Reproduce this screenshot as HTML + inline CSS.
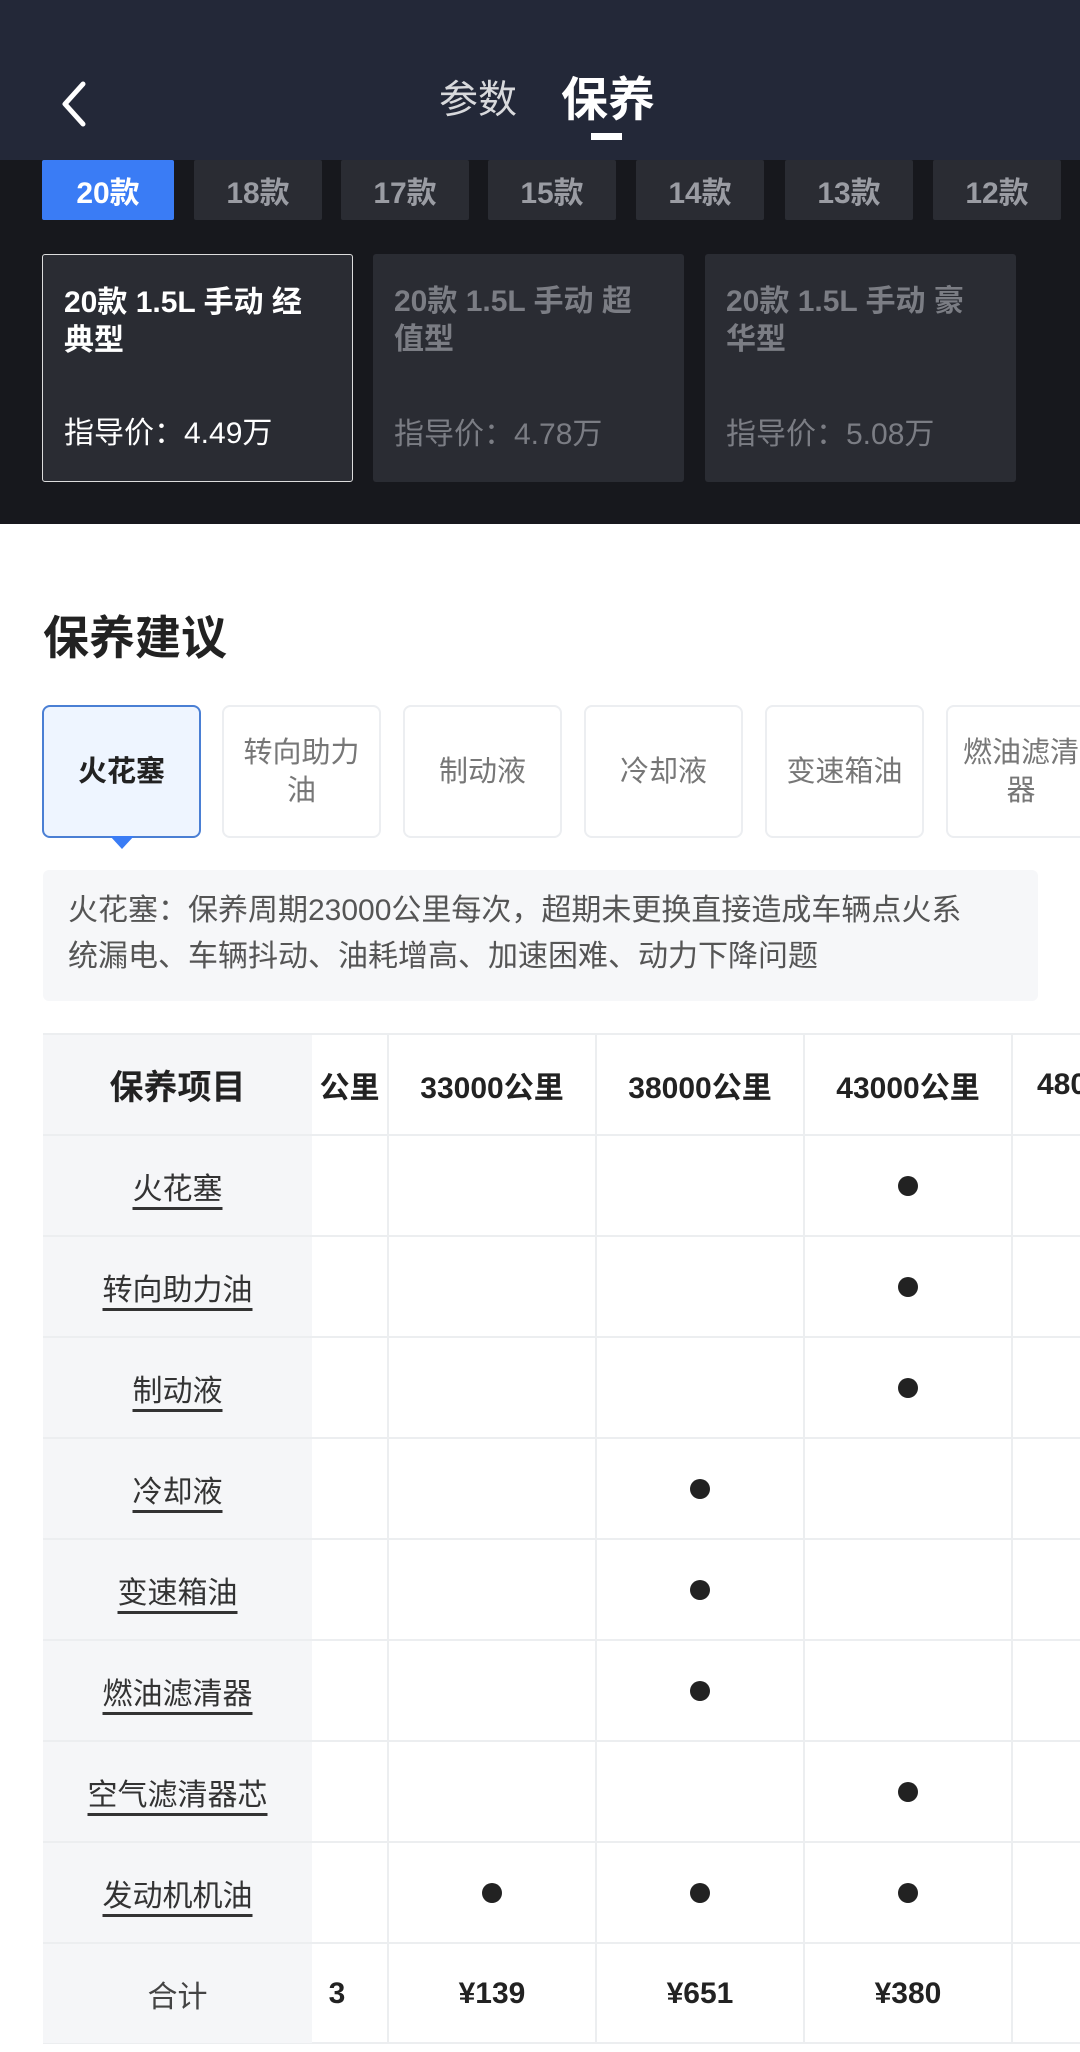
<!DOCTYPE html>
<html><head><meta charset="utf-8"><style>
*{margin:0;padding:0;box-sizing:border-box}
body{width:1080px;height:2052px;background:#fff;font-family:"Liberation Sans","Noto Sans CJK SC",sans-serif;position:relative;overflow:hidden}
.a{position:absolute}
.dark{left:0;top:0;width:1080px;height:524px;background:#17181d}
.hdr{left:0;top:0;width:1080px;height:160px;background:#232838}
.chip{top:160px;height:60px;width:128px;background:#2a2c33;color:#9a9ca3;font-size:30px;font-weight:bold;display:flex;align-items:center;justify-content:center;border-radius:2px}
.card{top:254px;width:311px;height:228px;background:#2a2c33;border-radius:3px;padding:29px 21px;color:#7b7d84;font-size:30px;font-weight:bold;line-height:38px;white-space:nowrap}
.card .p{position:absolute;left:21px;bottom:28px;font-weight:normal;font-size:30px}
.tab{top:705px;width:159px;height:133px;border:2px solid #eceef1;border-radius:8px;display:flex;align-items:center;justify-content:center;text-align:center;font-size:29px;color:#777;line-height:38px;background:#fff}
.row{left:43px;width:1037px;height:101px;border-top:2px solid #eceef0}
.cell{position:absolute;top:0;height:100%;display:flex;align-items:center;justify-content:center;font-size:30px;color:#222}
.dot{width:20px;height:20px;border-radius:50%;background:#222}
.vl{top:1033px;width:2px;height:1010px;background:#eceef0}
.name{left:0;width:269px;background:#f5f6f8;text-decoration:underline;text-underline-offset:8px;color:#333}
</style></head><body>
<div class="a dark"></div>
<div class="a hdr"></div>
<svg class="a" style="left:58px;top:80px" width="30" height="48" viewBox="0 0 30 48"><path d="M25 4 L7 24 L25 44" stroke="#fff" stroke-width="5" fill="none" stroke-linecap="round" stroke-linejoin="round"/></svg>
<div class="a" style="left:439px;top:76px;font-size:39px;line-height:50px;color:#d8d9dc">参数</div>
<div class="a" style="left:561px;top:72px;font-size:47px;line-height:56px;color:#fff;font-weight:bold">保养</div>
<div class="a" style="left:591px;top:133px;width:31px;height:7px;background:#fff"></div>
<div class="a chip" style="left:42px;width:132px;background:#3a7cf5;color:#fff">20款</div>
<div class="a chip" style="left:194px">18款</div>
<div class="a chip" style="left:341px">17款</div>
<div class="a chip" style="left:488px">15款</div>
<div class="a chip" style="left:636px">14款</div>
<div class="a chip" style="left:785px">13款</div>
<div class="a chip" style="left:933px">12款</div>
<div class="a card" style="left:42px;border:1.5px solid #ddd;color:#fff">20款 1.5L 手动 经<br>典型<div class="p">指导价：4.49万</div></div>
<div class="a card" style="left:373px">20款 1.5L 手动 超<br>值型<div class="p">指导价：4.78万</div></div>
<div class="a card" style="left:705px">20款 1.5L 手动 豪<br>华型<div class="p">指导价：5.08万</div></div>
<div class="a" style="left:43px;top:602px;font-size:46px;font-weight:bold;color:#222">保养建议</div>
<div class="a tab" style="left:42px;border:2.5px solid #4a7fd4;background:#eef5ff;color:#222;font-weight:bold">火花塞</div>
<div class="a" style="left:110px;top:836px;width:0;height:0;border-left:12px solid transparent;border-right:12px solid transparent;border-top:13px solid #3a7cf5"></div>
<div class="a tab" style="left:222px">转向助力<br>油</div>
<div class="a tab" style="left:403px">制动液</div>
<div class="a tab" style="left:584px">冷却液</div>
<div class="a tab" style="left:765px">变速箱油</div>
<div class="a tab" style="left:946px;width:150px">燃油滤清<br>器</div>
<div class="a" style="left:43px;top:870px;width:995px;height:131px;background:#f6f7f9;border-radius:6px;padding:18px 25px;font-size:30px;line-height:46px;color:#555;white-space:nowrap">火花塞：保养周期23000公里每次，超期未更换直接造成车辆点火系<br>统漏电、车辆抖动、油耗增高、加速困难、动力下降问题</div>
<div class="a" style="left:43px;top:1033px;width:1037px;height:1011px;border-left:2px solid #eceef0;border-bottom:2px solid #eceef0"></div>
<div class="a" style="left:43px;top:1033px;width:269px;height:1010px;background:#f5f6f8"></div>
<div class="a vl" style="left:387px"></div><div class="a vl" style="left:595px"></div><div class="a vl" style="left:803px"></div><div class="a vl" style="left:1011px"></div>

<div class="a row" style="top:1033px;border-top:2px solid #eceef0;font-weight:bold">
<div class="cell" style="left:0;width:269px;background:#f5f6f8;font-size:34px;font-weight:bold">保养项目</div>
<div class="cell" style="left:269px;width:75px;font-weight:bold">公里</div>
<div class="cell" style="left:345px;width:208px;font-weight:bold">33000公里</div>
<div class="cell" style="left:553px;width:208px;font-weight:bold">38000公里</div>
<div class="cell" style="left:761px;width:208px;font-weight:bold">43000公里</div>
<div class="cell" style="left:969px;width:100px;justify-content:flex-start;padding-left:25px;font-weight:bold">480</div>
</div>
<div class="a row" style="top:1134px"><div class="cell name">火花塞</div><div class="cell" style="left:761px;width:208px"><div class="dot"></div></div></div>
<div class="a row" style="top:1235px"><div class="cell name">转向助力油</div><div class="cell" style="left:761px;width:208px"><div class="dot"></div></div></div>
<div class="a row" style="top:1336px"><div class="cell name">制动液</div><div class="cell" style="left:761px;width:208px"><div class="dot"></div></div></div>
<div class="a row" style="top:1437px"><div class="cell name">冷却液</div><div class="cell" style="left:553px;width:208px"><div class="dot"></div></div></div>
<div class="a row" style="top:1538px"><div class="cell name">变速箱油</div><div class="cell" style="left:553px;width:208px"><div class="dot"></div></div></div>
<div class="a row" style="top:1639px"><div class="cell name">燃油滤清器</div><div class="cell" style="left:553px;width:208px"><div class="dot"></div></div></div>
<div class="a row" style="top:1740px"><div class="cell name">空气滤清器芯</div><div class="cell" style="left:761px;width:208px"><div class="dot"></div></div></div>
<div class="a row" style="top:1841px"><div class="cell name">发动机机油</div><div class="cell" style="left:345px;width:208px"><div class="dot"></div></div><div class="cell" style="left:553px;width:208px"><div class="dot"></div></div><div class="cell" style="left:761px;width:208px"><div class="dot"></div></div></div>
<div class="a row" style="top:1942px"><div class="cell" style="left:0;width:269px;background:#f5f6f8;color:#444">合计</div>
<div class="cell" style="left:269px;width:50px;font-weight:bold">3</div>
<div class="cell" style="left:345px;width:208px;font-weight:bold">¥139</div>
<div class="cell" style="left:553px;width:208px;font-weight:bold">¥651</div>
<div class="cell" style="left:761px;width:208px;font-weight:bold">¥380</div></div>
</body></html>
